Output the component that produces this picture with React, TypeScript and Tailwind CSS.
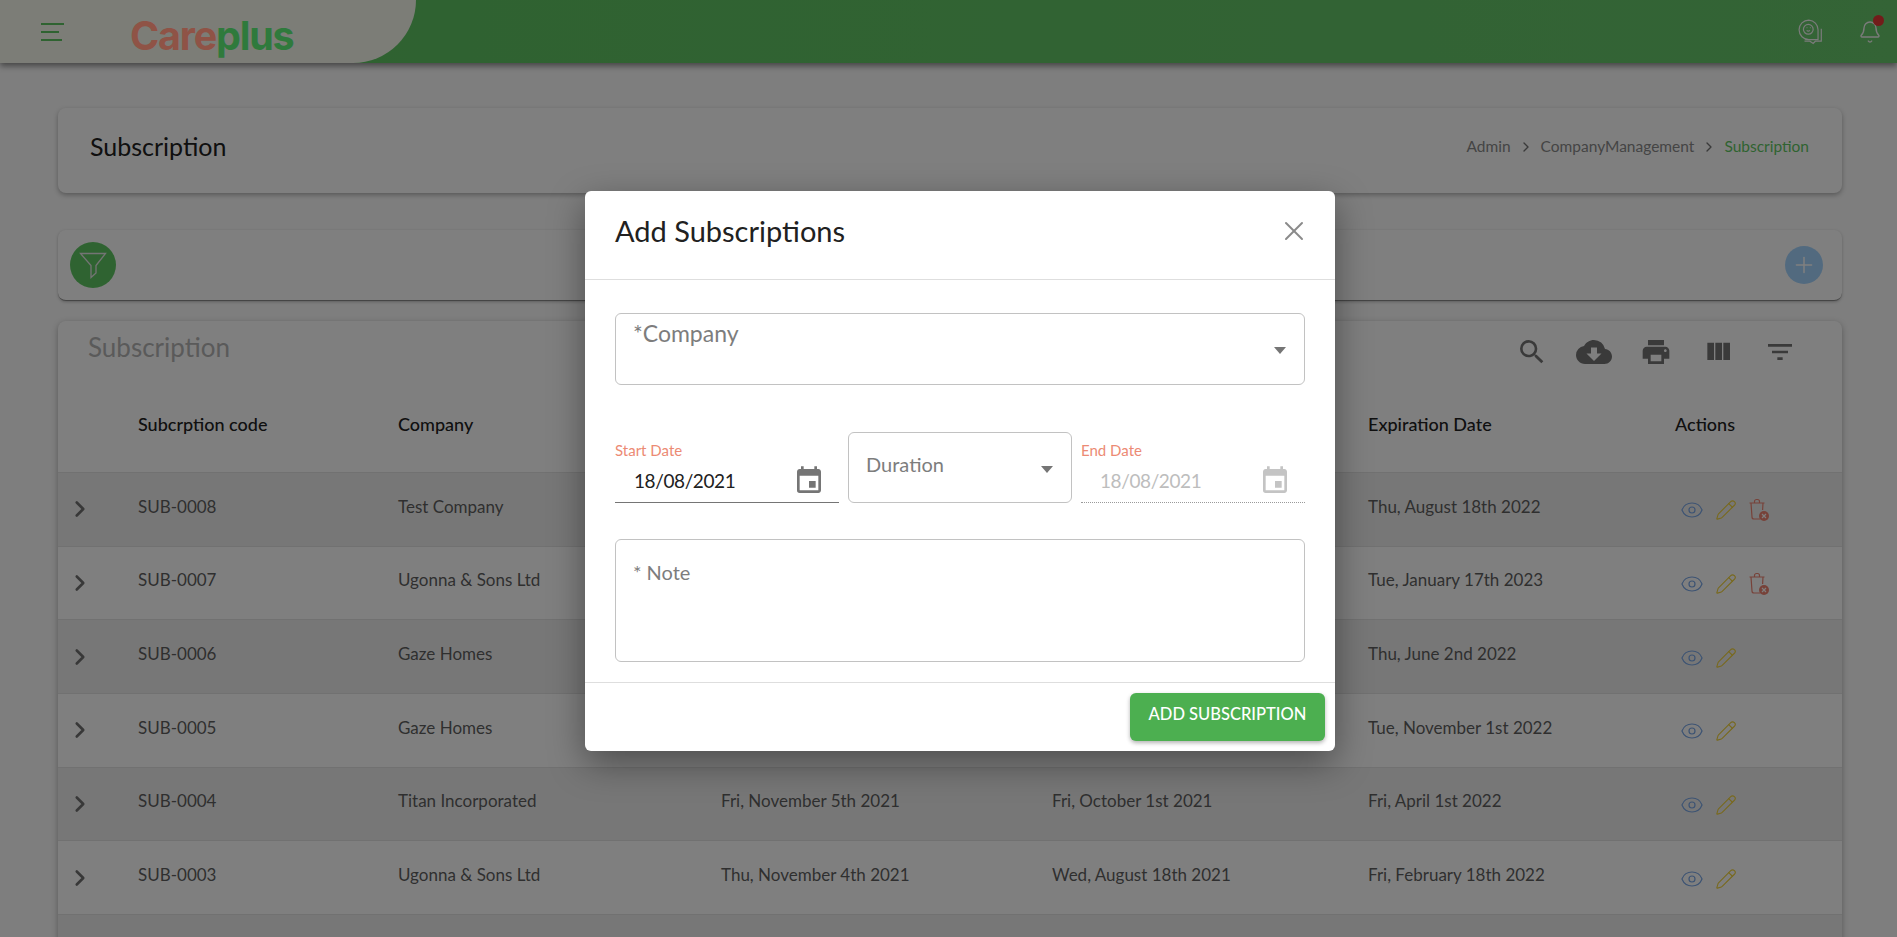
import { ChevronRight, Eye, Pencil, Plus, X, Bell } from 'lucide-react'

const rows = [
  { code: 'SUB-0008', company: 'Test Company', created: '', start: '', expires: 'Thu, August 18th 2022', canDelete: true },
  { code: 'SUB-0007', company: 'Ugonna & Sons Ltd', created: '', start: '', expires: 'Tue, January 17th 2023', canDelete: true },
  { code: 'SUB-0006', company: 'Gaze Homes', created: '', start: '', expires: 'Thu, June 2nd 2022', canDelete: false },
  { code: 'SUB-0005', company: 'Gaze Homes', created: '', start: '', expires: 'Tue, November 1st 2022', canDelete: false },
  { code: 'SUB-0004', company: 'Titan Incorporated', created: 'Fri, November 5th 2021', start: 'Fri, October 1st 2021', expires: 'Fri, April 1st 2022', canDelete: false },
  { code: 'SUB-0003', company: 'Ugonna & Sons Ltd', created: 'Thu, November 4th 2021', start: 'Wed, August 18th 2021', expires: 'Fri, February 18th 2022', canDelete: false },
]

const rowGrid = 'grid grid-cols-[80px_260px_323px_331px_316px_307px_1fr]'

function CalendarIcon({ className }: { className: string }) {
  return (
    <svg className={className} viewBox="0 0 24 24" fill="currentColor" aria-hidden="true">
      <path d="M17 12h-5v5h5v-5zM16 1v2H8V1H6v2H5c-1.11 0-1.99.9-1.99 2L3 19a2 2 0 002 2h14c1.1 0 2-.9 2-2V5c0-1.1-.9-2-2-2h-1V1h-2zm3 18H5V8h14v11z" />
    </svg>
  )
}

function TrashIcon() {
  return (
    <svg width="22" height="24" viewBox="0 0 22 24" fill="none" stroke="#ee8472" strokeWidth="1.2" aria-hidden="true">
      <path d="M1.5 5h15M3 5l1 14a2 2 0 002 2h6M15 5l-.4 7M6.5 5V3.5a2 2 0 012-2h1a2 2 0 012 2V5" />
      <circle cx="16" cy="18" r="5" fill="#ee8472" stroke="none" />
      <path d="M14 16l4 4M18 16l-4 4" stroke="#fff" strokeWidth="1.2" />
    </svg>
  )
}

function Caret({ className }: { className: string }) {
  return <span className={`h-0 w-0 border-x-[6.5px] border-t-[7px] border-x-transparent border-t-[#757575] ${className}`} />
}

function ToolbarIcon({ d, width = 32 }: { d: string; width?: number }) {
  return (
    <span className="flex w-[62px] justify-center">
      <svg width={width} height={width} viewBox="0 0 24 24" fill="currentColor" aria-hidden="true">
        <path d={d} />
      </svg>
    </span>
  )
}

export default function App() {
  return (
    <div className="relative h-[937px] overflow-hidden bg-[#fcfcfc] font-['Lato','Noto_Sans',sans-serif] text-[#212121]">
      {/* top bar */}
      <header className="flex h-[63px] items-center justify-between bg-linear-to-r from-[#5cc45f] to-[#68c86c] pr-[15px] shadow-[0_3px_6px_rgba(0,0,0,0.45)]">
        <div className="flex h-full w-[416px] items-center rounded-br-[72px] bg-[#f8faef] pl-[41px]">
          <svg width="23" height="18" viewBox="0 0 23 18" stroke="#5fc763" strokeWidth="2" aria-hidden="true">
            <path d="M0 1h23M0 9h18M0 17h21" />
          </svg>
        </div>
        <div className="flex items-center gap-[34px] text-[#f5f5f5]">
          <svg width="26" height="26" viewBox="0 0 24 24" fill="none" stroke="currentColor" strokeWidth="1.1" aria-hidden="true">
            <path d="M10 1a9 9 0 100 18h8.5v-9A9 9 0 0010 1z" />
            <circle cx="9.5" cy="9.5" r="4.5" />
            <path d="M8 10.5c.8.8 2.2.8 3 0M8 8h.6M11 8h.6M21.5 9v11.5H16l-2 2-3-2H6" />
          </svg>
          <div className="relative">
            <Bell className="h-[24px] w-[24px]" strokeWidth={1.4} />
            <span className="absolute top-[-5px] right-[-2px] h-[11px] w-[11px] rounded-full bg-[#e53935]" />
          </div>
        </div>
      </header>

      <main className="pt-[45px] pr-[55px] pl-[58px]">
        <section className="flex h-[85px] items-center justify-between rounded-lg bg-white pr-[33px] pb-[7px] pl-[32px] shadow-[0_2px_5px_rgba(0,0,0,0.3)]">
          <h1 className="text-[25px]">Subscription</h1>
          <nav className="flex items-center gap-[7px] text-[15.5px] text-[#8a8a8a]">
            <span>Admin</span>
            <ChevronRight className="h-4 w-4 text-[#757575]" />
            <span>CompanyManagement</span>
            <ChevronRight className="h-4 w-4 text-[#757575]" />
            <span className="text-[#5fc763]">Subscription</span>
          </nav>
        </section>

        <section className="mt-[37px] flex h-[71px] items-center justify-between rounded-lg border-b border-[#8a8a8a] bg-white pr-[19px] pl-[12px] shadow-[0_1px_3px_rgba(0,0,0,0.25)]">
          <div className="flex h-[46px] w-[46px] items-center justify-center rounded-full bg-[#5fc763]">
            <svg width="28" height="28" viewBox="0 0 28 28" fill="none" stroke="#e8e8e8" strokeWidth="1.3" aria-hidden="true">
              <path d="M1.5 2.5h25L17 14.5V22l-5 4.5v-12z" />
            </svg>
          </div>
          <div className="flex h-[38px] w-[38px] items-center justify-center rounded-full bg-[#a5d5ff]">
            <Plus className="h-[26px] w-[26px] text-white" strokeWidth={1.4} />
          </div>
        </section>

        <section className="mt-[20px] rounded-lg bg-white shadow-[0_2px_6px_rgba(0,0,0,0.3)]">
          <div className="flex h-[50px] items-center justify-between pr-[31px] pl-[30px]">
            <h2 className="mt-[2px] text-[26px] text-[#b5b5b5]">Subscription</h2>
            <div className="mt-[12px] flex items-center text-[#757575]">
              <ToolbarIcon d="M15.5 14h-.79l-.28-.27A6.47 6.47 0 0016 9.5 6.5 6.5 0 109.5 16c1.61 0 3.09-.59 4.23-1.57l.27.28v.79l5 4.99L20.49 19l-4.99-5zm-6 0C7.01 14 5 11.99 5 9.5S7.01 5 9.5 5 14 7.01 14 9.5 11.99 14 9.5 14z" />
              <ToolbarIcon width={36} d="M19.35 10.04A7.49 7.49 0 0012 4C9.11 4 6.6 5.64 5.35 8.04A5.994 5.994 0 000 14c0 3.31 2.69 6 6 6h13c2.76 0 5-2.24 5-5 0-2.64-2.05-4.78-4.65-4.96zM17 13l-5 5-5-5h3V9h4v4h3z" />
              <ToolbarIcon d="M19 8H5c-1.66 0-3 1.34-3 3v6h4v4h12v-4h4v-6c0-1.66-1.34-3-3-3zm-3 11H8v-5h8v5zm3-7c-.55 0-1-.45-1-1s.45-1 1-1 1 .45 1 1-.45 1-1 1zm-1-9H6v4h12V3z" />
              <ToolbarIcon d="M10 18h5V5h-5v13zm-6 0h5V5H4v13zM16 5v13h5V5h-5z" />
              <ToolbarIcon d="M10 18h4v-2h-4v2zM3 6v2h18V6H3zm3 7h12v-2H6v2z" />
            </div>
          </div>

          <div className={`${rowGrid} h-[102px] items-center border-b border-[#e2e2e2] pt-[5px] text-[18px] font-medium`}>
            <span />
            <span>Subcrption code</span>
            <span>Company</span>
            <span />
            <span />
            <span>Expiration Date</span>
            <span>Actions</span>
          </div>

          {rows.map((row, i) => (
            <div
              key={row.code}
              className={`${rowGrid} h-[73.7px] items-center border-b border-[#e2e2e2] pb-[6px] text-[17px] text-[#5f5f5f] ${i % 2 === 0 ? 'bg-[#efefef]' : 'bg-white'}`}
            >
              <ChevronRight className="ml-[9px] h-[26px] w-[26px] translate-y-[3px] text-[#707070]" strokeWidth={2.4} />
              <span>{row.code}</span>
              <span>{row.company}</span>
              <span>{row.created}</span>
              <span>{row.start}</span>
              <span>{row.expires}</span>
              <div className="ml-[5px] flex translate-y-[4px] items-center gap-[11px]">
                <Eye className="h-[24px] w-[24px] text-[#7aa7e6]" strokeWidth={1.2} />
                <Pencil className="h-[22px] w-[22px] text-[#f0d23c]" strokeWidth={1.2} />
                {row.canDelete && <TrashIcon />}
              </div>
            </div>
          ))}
          <div className="h-[40px] bg-[#efefef]" />
        </section>
      </main>

      {/* backdrop and dialog */}
      <div className="absolute inset-0 bg-black/50" />

      <div className="absolute top-[10px] left-[130px] font-['Inter',sans-serif] text-[39.5px] leading-[52px] font-bold tracking-[-1.2px]">
        <span className="text-[#8f5346]">Care</span>
        <span className="text-[#2f7a3c]">plus</span>
      </div>

      <div className="absolute top-[191px] left-[585px] flex h-[560px] w-[750px] flex-col rounded-md bg-white shadow-[0_12px_36px_rgba(0,0,0,0.4)]">
        <div className="flex h-[89px] items-center justify-between border-b border-[#dedede] pr-[25px] pl-[30px]">
          <h2 className="mt-[-8px] text-[29px]">Add Subscriptions</h2>
          <X className="mt-[-8px] h-[32px] w-[32px] text-[#8a8a8a]" strokeWidth={1.5} />
        </div>

        <div className="flex flex-1 flex-col px-[30px] pt-[33px]">
          <div className="flex h-[72px] items-start justify-between rounded-md border border-[#c2c2c2] pr-[18px] pl-[17px]">
            <span className="mt-[2px] text-[23px] text-[#7d7d7d]">*Company</span>
            <Caret className="mt-[33px]" />
          </div>

          <div className="mt-[47px] grid grid-cols-[224px_224px_224px] gap-x-[9px]">
            <div className="flex h-[71px] flex-col justify-end border-b border-[#757575]">
              <span className="pb-[4px] text-[15px] leading-[20px] text-[#ec8a74]">Start Date</span>
              <div className="flex h-[38px] items-center justify-between pr-[14px] pb-[4px] pl-[19px]">
                <span className="text-[19px] tracking-[-0.4px]">18/08/2021</span>
                <CalendarIcon className="h-[32px] w-[32px] text-[#757575]" />
              </div>
            </div>
            <div className="flex h-[71px] items-start justify-between rounded-md border border-[#c2c2c2] pr-[18px] pl-[17px]">
              <span className="mt-[16px] text-[20px] text-[#7d7d7d]">Duration</span>
              <Caret className="mt-[33px]" />
            </div>
            <div className="flex h-[71px] flex-col justify-end border-b border-dotted border-[#9a9a9a]">
              <span className="pb-[4px] text-[15px] leading-[20px] text-[#ec8a74]">End Date</span>
              <div className="flex h-[38px] items-center justify-between pr-[14px] pb-[4px] pl-[19px]">
                <span className="text-[19px] tracking-[-0.4px] text-[#bdbdbd]">18/08/2021</span>
                <CalendarIcon className="h-[32px] w-[32px] text-[#c4c4c4]" />
              </div>
            </div>
          </div>

          <div className="mt-[36px] h-[123px] rounded-md border border-[#c2c2c2] pt-[17px] pl-[17px]">
            <span className="text-[20px] text-[#7d7d7d]">* Note</span>
          </div>
        </div>

        <div className="flex h-[69px] items-start justify-end border-t border-[#dedede] pt-[10px] pr-[10px]">
          <button className="h-[48px] w-[195px] rounded-md bg-[#4caf50] pb-[6px] text-[16.5px] font-medium text-white shadow-[0_2px_4px_rgba(0,0,0,0.3)]">
            ADD SUBSCRIPTION
          </button>
        </div>
      </div>
    </div>
  )
}
